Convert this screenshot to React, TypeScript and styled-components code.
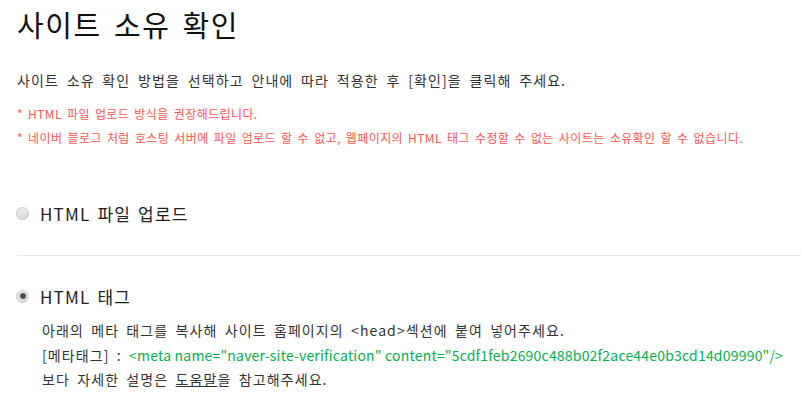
import styled, { createGlobalStyle } from "styled-components";

const GlobalStyle = createGlobalStyle`
html, body {
  margin: 0;
  padding: 0;
  background: #ffffff;
}
body {
  font-family: 'Noto Sans CJK KR', 'Liberation Sans', sans-serif;
  color: #333333;
}
`;

const Page = styled.div`
padding: 0 0 0 17px;
width: 784px;
`;

const Title = styled.h1`
margin: 0;
padding-top: 4px;
height: 52px;
font-weight: 400;
font-size: 29px;
line-height: 40px;
color: #111111;
letter-spacing: 1.6px;
word-spacing: 4px;
`;

const Lead = styled.p`
margin: 15px 0 0 0;
font-size: 14px;
line-height: 18px;
color: #333333;
letter-spacing: 1.1px;
word-spacing: 3.5px;
`;

const Notes = styled.ul`
list-style: none;
margin: 13px 0 0 0;
padding: 0;
`;

const Note = styled.li`
font-size: 12px;
line-height: 24px;
color: #ff5656;
letter-spacing: 0.4px;
word-spacing: 2px;
`;

const Options = styled.div`
margin-top: 43px;
`;

const Option = styled.div<{ $last?: boolean }>`
padding: ${props => props.$last ? "20px 0 0 0" : "0 0 22px 0"};
border-bottom: ${props => props.$last ? "none" : "1px solid #e9e9e9"};
`;

const OptionRow = styled.label`
display: flex;
align-items: center;
gap: 11px;
height: 40px;
font-size: 17px;
color: #222222;
letter-spacing: 1.2px;
word-spacing: 2px;
`;

const Radio = styled.span<{ $checked?: boolean }>`
position: relative;
width: 13px;
height: 13px;
margin-left: -1px;
border-radius: 50%;
border: 1px solid #c6c6c6;
box-sizing: border-box;
background: linear-gradient(#ececec, #dadada);
&::after {
  content: "";
  display: ${props => props.$checked ? "block" : "none"};
  position: absolute;
  left: 2.5px;
  top: 2.5px;
  width: 6px;
  height: 6px;
  border-radius: 50%;
  background: #4e4e4e;
}
`;

const Detail = styled.div`
margin-top: 2px;
padding-left: 25px;
font-size: 14px;
line-height: 24.5px;
color: #333333;
letter-spacing: 1.1px;
word-spacing: 3px;
`;

const Code = styled.span`
color: #08ad50;
letter-spacing: 0.2px;
word-spacing: 0;
`;

const HelpLink = styled.a`
color: #333333;
text-decoration: underline;
`;

const App = () => {
    return (
        <>
            <GlobalStyle />
            <Page>
                <Title>사이트 소유 확인</Title>
                <Lead>사이트 소유 확인 방법을 선택하고 안내에 따라 적용한 후 [확인]을 클릭해 주세요.</Lead>
                <Notes>
                    <Note>* HTML 파일 업로드 방식을 권장해드립니다.</Note>
                    <Note>* 네이버 블로그 처럼 호스팅 서버에 파일 업로드 할 수 없고, 웹페이지의 HTML 태그 수정할 수 없는 사이트는 소유확인 할 수 없습니다.</Note>
                </Notes>
                <Options>
                    <Option>
                        <OptionRow><Radio />HTML 파일 업로드</OptionRow>
                    </Option>
                    <Option $last>
                        <OptionRow><Radio $checked />HTML 태그</OptionRow>
                        <Detail>
                            <div>아래의 메타 태그를 복사해 사이트 홈페이지의 &lt;head&gt;섹션에 붙여 넣어주세요.</div>
                            <div>[메타태그] : <Code>&lt;meta name="naver-site-verification" content="5cdf1feb2690c488b02f2ace44e0b3cd14d09990"/&gt;</Code></div>
                            <div>보다 자세한 설명은 <HelpLink>도움말</HelpLink>을 참고해주세요.</div>
                        </Detail>
                    </Option>
                </Options>
            </Page>
        </>
    );
};

export default App;
